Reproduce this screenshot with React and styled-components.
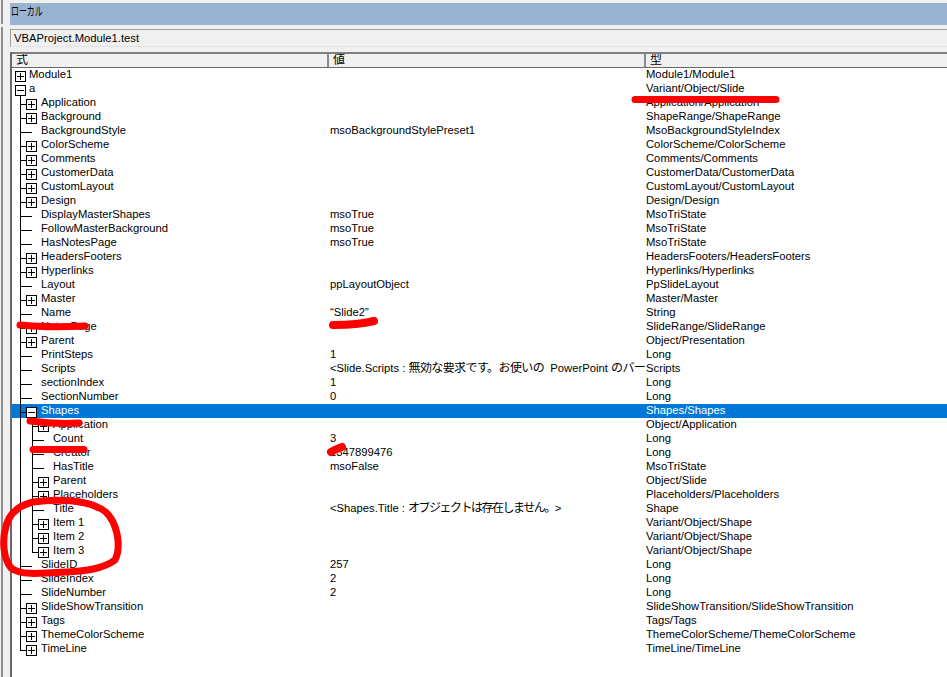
import React from 'react';
import styled, { createGlobalStyle } from 'styled-components';

const Jp = styled.span`
  font-size: 12px;
  letter-spacing: ${(p) => (p.$tight ? '-1.5px' : '-0.6px')};
`;

const rows = [
  { name: 'Module1', level: 0, box: '+', type: 'Module1/Module1' },
  { name: 'a', level: 0, box: '-', type: 'Variant/Object/Slide' },
  { name: 'Application', level: 1, box: '+', type: 'Application/Application' },
  { name: 'Background', level: 1, box: '+', type: 'ShapeRange/ShapeRange' },
  { name: 'BackgroundStyle', level: 1, value: 'msoBackgroundStylePreset1', type: 'MsoBackgroundStyleIndex' },
  { name: 'ColorScheme', level: 1, box: '+', type: 'ColorScheme/ColorScheme' },
  { name: 'Comments', level: 1, box: '+', type: 'Comments/Comments' },
  { name: 'CustomerData', level: 1, box: '+', type: 'CustomerData/CustomerData' },
  { name: 'CustomLayout', level: 1, box: '+', type: 'CustomLayout/CustomLayout' },
  { name: 'Design', level: 1, box: '+', type: 'Design/Design' },
  { name: 'DisplayMasterShapes', level: 1, value: 'msoTrue', type: 'MsoTriState' },
  { name: 'FollowMasterBackground', level: 1, value: 'msoTrue', type: 'MsoTriState' },
  { name: 'HasNotesPage', level: 1, value: 'msoTrue', type: 'MsoTriState' },
  { name: 'HeadersFooters', level: 1, box: '+', type: 'HeadersFooters/HeadersFooters' },
  { name: 'Hyperlinks', level: 1, box: '+', type: 'Hyperlinks/Hyperlinks' },
  { name: 'Layout', level: 1, value: 'ppLayoutObject', type: 'PpSlideLayout' },
  { name: 'Master', level: 1, box: '+', type: 'Master/Master' },
  { name: 'Name', level: 1, value: '“Slide2”', type: 'String' },
  { name: 'NotesPage', level: 1, box: '+', type: 'SlideRange/SlideRange' },
  { name: 'Parent', level: 1, box: '+', type: 'Object/Presentation' },
  { name: 'PrintSteps', level: 1, value: '1', type: 'Long' },
  {
    name: 'Scripts',
    level: 1,
    value: (
      <>
        {'<Slide.Scripts : '}
        <Jp>無効な要求です。お使いの</Jp>
        {'  PowerPoint '}
        <Jp>のバー</Jp>
      </>
    ),
    type: 'Scripts',
  },
  { name: 'sectionIndex', level: 1, value: '1', type: 'Long' },
  { name: 'SectionNumber', level: 1, value: '0', type: 'Long' },
  { name: 'Shapes', level: 1, box: '-', type: 'Shapes/Shapes', selected: true },
  { name: 'Application', level: 2, box: '+', type: 'Object/Application' },
  { name: 'Count', level: 2, value: '3', type: 'Long' },
  { name: 'Creator', level: 2, value: '1347899476', type: 'Long' },
  { name: 'HasTitle', level: 2, value: 'msoFalse', type: 'MsoTriState' },
  { name: 'Parent', level: 2, box: '+', type: 'Object/Slide' },
  { name: 'Placeholders', level: 2, box: '+', type: 'Placeholders/Placeholders' },
  {
    name: 'Title',
    level: 2,
    value: (
      <>
        {'<Shapes.Title : '}
        <Jp $tight>オブジェクトは存在しません。</Jp>
        {'>'}
      </>
    ),
    type: 'Shape',
  },
  { name: 'Item 1', level: 2, box: '+', type: 'Variant/Object/Shape' },
  { name: 'Item 2', level: 2, box: '+', type: 'Variant/Object/Shape' },
  { name: 'Item 3', level: 2, box: '+', type: 'Variant/Object/Shape', lastChild: true },
  { name: 'SlideID', level: 1, value: '257', type: 'Long' },
  { name: 'SlideIndex', level: 1, value: '2', type: 'Long' },
  { name: 'SlideNumber', level: 1, value: '2', type: 'Long' },
  { name: 'SlideShowTransition', level: 1, box: '+', type: 'SlideShowTransition/SlideShowTransition' },
  { name: 'Tags', level: 1, box: '+', type: 'Tags/Tags' },
  { name: 'ThemeColorScheme', level: 1, box: '+', type: 'ThemeColorScheme/ThemeColorScheme' },
  { name: 'TimeLine', level: 1, box: '+', type: 'TimeLine/TimeLine', lastRoot: true },
];

const GlobalStyle = createGlobalStyle`
  html, body { margin: 0; padding: 0; background: #f0f0f0; }
  body { font-family: "Liberation Sans", "Noto Sans CJK JP", sans-serif; font-size: 11.25px; color: #000; overflow: hidden; }
`;

const Page = styled.div`
  position: relative;
  width: 947px;
  height: 677px;
  display: flex;
  overflow: hidden;
  background: #f0f0f0;
`;

const Gutter = styled.div`
  width: 10px;
  flex: none;
  display: flex;
  flex-direction: column;
  gap: 3px;
  padding-left: 1px;
  box-sizing: border-box;
`;

const Sash = styled.div`
  width: 2px;
  height: ${(p) => p.$height || 'auto'};
  flex: ${(p) => (p.$height ? 'none' : '1')};
  background: #8f8f8f;
`;

const Main = styled.div`
  flex: 1;
  min-width: 0;
  display: flex;
  flex-direction: column;
  padding-top: 3px;
`;

const TitleBar = styled.div`
  height: 22px;
  background: #99b4d1;
  padding: 2px 0 0 1px;
  box-sizing: border-box;
  line-height: 14px;
`;

const TitleText = styled.span`
  display: inline-block;
  font-size: 12px;
  transform: scaleX(0.66);
  transform-origin: left center;
`;

const ContextArea = styled.div`
  height: 27px;
  padding-top: 4px;
  box-sizing: border-box;
`;

const ContextField = styled.div`
  height: 18px;
  box-sizing: border-box;
  border: 1px solid #a0a0a0;
  border-right: none;
  border-bottom-color: #e3e3e3;
  padding-left: 3px;
  line-height: 16px;
`;

const Panel = styled.div`
  flex: 1;
  min-height: 0;
  display: flex;
  flex-direction: column;
  border-left: 2px solid #696969;
  background: #fff;
`;

const Header = styled.div`
  display: grid;
  grid-template-columns: 317px 317px 1fr;
  height: 16px;
  box-sizing: border-box;
  background: #f0f0f0;
  border-top: 2px solid #7f7f7f;
  border-bottom: 1px solid #696969;
`;

const HeaderCell = styled.div`
  padding-left: 4px;
  font-size: 12px;
  line-height: 13px;
  box-sizing: border-box;
  border-right: ${(p) => (p.$last ? 'none' : '2px solid #8a8a8a')};
  overflow: hidden;
`;

const Row = styled.div`
  display: grid;
  grid-template-columns: 317px 316px 1fr;
  height: 14px;
  line-height: 12px;
  white-space: pre;
  background: ${(p) => (p.$selected ? '#0078d7' : 'transparent')};
  color: ${(p) => (p.$selected ? '#fff' : '#000')};
`;

const NameCell = styled.div`
  display: flex;
  overflow: hidden;
`;

const Label = styled.span`
  margin-left: 2px;
`;

const ValueCell = styled.div`
  overflow: hidden;
  padding-left: 1px;
`;

const TypeCell = styled.div`
  padding-left: 1px;
`;

const Annotation = styled.svg`
  position: absolute;
  inset: 0;
  pointer-events: none;
`;

function ExpandBox({ x, sign }) {
  return (
    <g>
      <rect x={x + 0.5} y={3.5} width={10} height={10} fill="#fff" stroke="#000" />
      <path d={`M${x + 2} 8.5H${x + 9}`} stroke="#000" />
      {sign === '+' && <path d={`M${x + 5.5} 5V12`} stroke="#000" />}
    </g>
  );
}

// tree lines and the +/- box at the start of a row
function TreeGlyph({ row, index }) {
  const width = row.level * 12 + 15;
  const { level, box } = row;
  const outerEnd = row.lastRoot ? 8.5 : 14;
  return (
    <svg width={width} height={14} style={{ flex: 'none' }} shapeRendering="crispEdges">
      {index === 1 && <path d="M8.5 13V14" stroke="#000" />}
      {level > 0 && <path d={`M8.5 0V${outerEnd}`} stroke="#000" />}
      {level === 1 && <path d={`M8.5 8.5H${box ? 14 : 20}`} stroke="#000" />}
      {level === 2 && <path d={`M20.5 0V${row.lastChild ? 8.5 : 14}`} stroke="#000" />}
      {level === 2 && <path d={`M20.5 8.5H${box ? 26 : 32}`} stroke="#000" />}
      {row.selected && <path d="M20.5 13V14" stroke="#000" />}
      {box && level === 0 && <ExpandBox x={3} sign={box} />}
      {box && level === 1 && <ExpandBox x={14} sign={box} />}
      {box && level === 2 && <ExpandBox x={26} sign={box} />}
    </svg>
  );
}

export default function App() {
  return (
    <Page>
      <GlobalStyle />
      <Gutter>
        <Sash $height="24px" />
        <Sash />
      </Gutter>
      <Main>
        <TitleBar>
          <TitleText>ローカル</TitleText>
        </TitleBar>
        <ContextArea>
          <ContextField>VBAProject.Module1.test</ContextField>
        </ContextArea>
        <Panel>
          <Header>
            <HeaderCell>式</HeaderCell>
            <HeaderCell>値</HeaderCell>
            <HeaderCell $last>型</HeaderCell>
          </Header>
          {rows.map((row, i) => (
            <Row key={i} $selected={row.selected}>
              <NameCell>
                <TreeGlyph row={row} index={i} />
                <Label>{row.name}</Label>
              </NameCell>
              <ValueCell>{row.value}</ValueCell>
              <TypeCell>{row.type}</TypeCell>
            </Row>
          ))}
        </Panel>
      </Main>
      <Annotation width="947" height="677" fill="none" stroke="#ff0000" strokeLinecap="round" strokeLinejoin="round">
        <path d="M635 99.5H776" strokeWidth="7" />
        <path d="M20 325C40 327 65 327 85 326" strokeWidth="7" />
        <path d="M333 325C350 325 362 324 374 321" strokeWidth="8" />
        <path d="M30 421C45 423 65 424 79 423" strokeWidth="7" />
        <path d="M33 449.5H84" strokeWidth="7" />
        <path d="M331 452C335 449 340 448 342 447" strokeWidth="8" />
        <path
          d="M97 507C85 501 60 498 33 502C20 505 10 512 6 526C2 540 3 558 11 568C20 575 35 574 67 572C85 571 103 569 115 560C120 550 119 535 113 522C108 512 103 509 97 507"
          strokeWidth="7"
        />
      </Annotation>
    </Page>
  );
}
